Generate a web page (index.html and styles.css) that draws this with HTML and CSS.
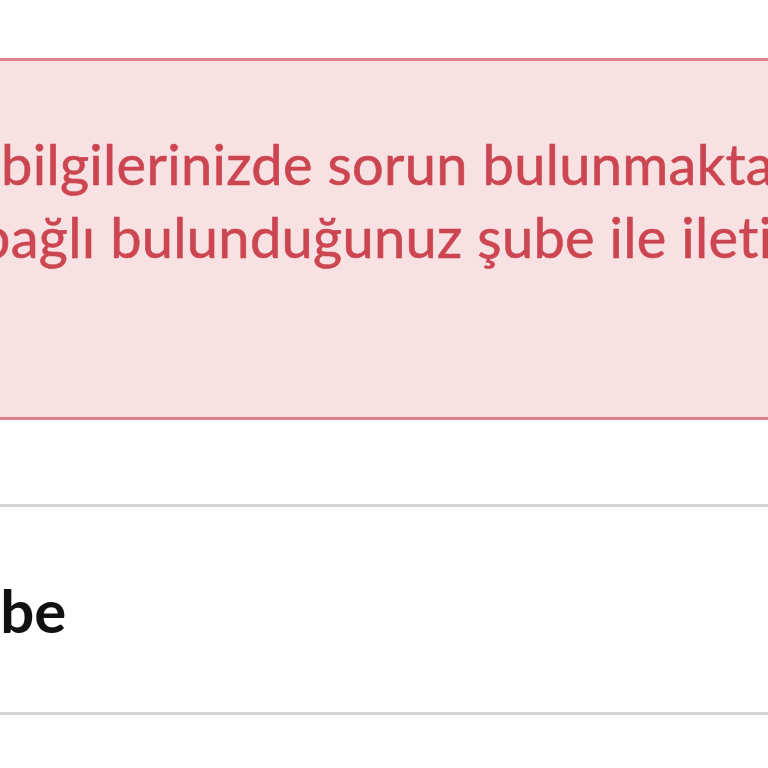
FILE: index.html
```html
<!DOCTYPE html>
<html lang="tr">
<head>
<meta charset="utf-8">
<link rel="stylesheet" href="styles.css">
</head>
<body>
<div class="page">
  <div class="alert">
    <span class="line line1">bilgilerinizde sorun bulunmaktadır.</span>
    <span class="line line2">bağlı bulunduğunuz şube ile iletişime geçiniz.</span>
  </div>
  <div class="spacer"></div>
  <div class="row">
    <span class="label">Şube</span>
  </div>
</div>
</body>
</html>
```
FILE: styles.css
```css
html, body {
  margin: 0;
  padding: 0;
  background: #ffffff;
  overflow: hidden;
  width: 768px;
  height: 768px;
}
.page {
  padding-top: 58px;
  font-family: "Lato", "Open Sans", sans-serif;
}
.alert {
  background: #f8e1e2;
  border-top: 3px solid #df808a;
  border-bottom: 3px solid #df808a;
  height: 362px;
  box-sizing: border-box;
  padding-top: 66px;
  color: #cc4651;
  font-size: 56px;
  line-height: 73px;
  letter-spacing: 0.3px;
  -webkit-text-stroke: 0.6px #cc4651;
}
.line {
  display: block;
  white-space: nowrap;
}
.line1 {
  margin-left: 1px;
}
.line2 {
  margin-left: -21px;
}
.spacer {
  height: 84px;
  border-bottom: 3px solid #d4d4d4;
}
.row {
  height: 205px;
  border-bottom: 3px solid #d4d4d4;
  display: flex;
  align-items: center;
  font-size: 60px;
  font-weight: 700;
  color: #111;
}
.label {
  margin-left: -66px;
}
```
